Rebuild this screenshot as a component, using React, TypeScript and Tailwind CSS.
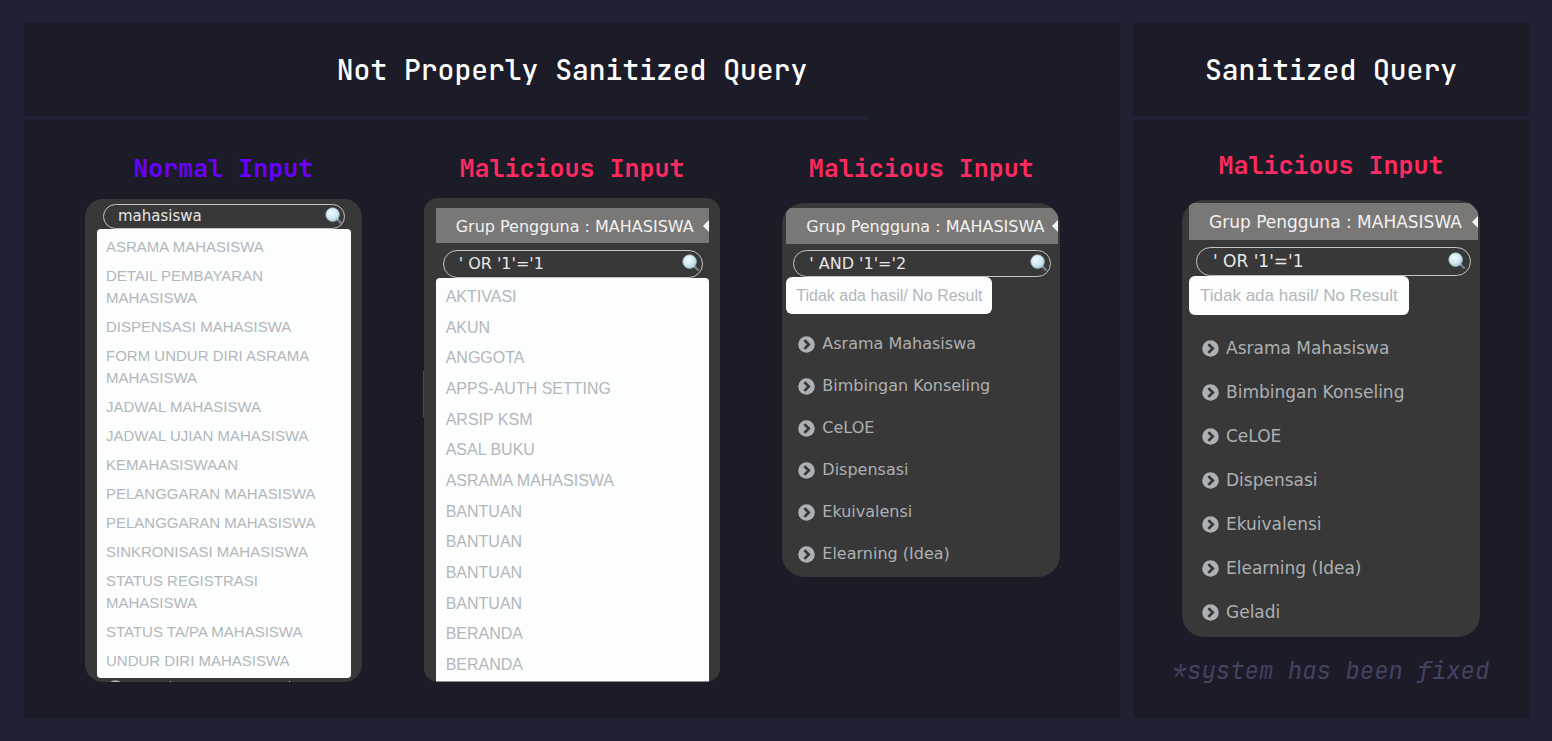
import { useId } from "react";
import type { ReactNode } from "react";

const mono = "font-['JetBrains_Mono','DejaVu_Sans_Mono',monospace]";

function Magnifier() {
  const id = useId();
  return (
    <svg viewBox="0 0 18 18" className="mb-[2px] h-[18px] w-[18px] shrink-0" aria-hidden="true">
      <defs>
        <radialGradient id={id} cx="0.4" cy="0.35" r="0.7">
          <stop offset="0" stopColor="#f0fafd" />
          <stop offset="0.6" stopColor="#cfe9f3" />
          <stop offset="1" stopColor="#a5cbd9" />
        </radialGradient>
      </defs>
      <path d="M12 12 L16 15.8" stroke="#747b7e" strokeWidth="2.4" strokeLinecap="round" />
      <path d="M11.5 11.5 L13.2 13.2" stroke="#a9afb2" strokeWidth="1.6" />
      <circle cx="7.6" cy="7.6" r="6.8" fill={`url(#${id})`} stroke="#a3b4bb" strokeWidth="0.8" />
    </svg>
  );
}

function ChevronDisc() {
  return (
    <svg viewBox="0 0 16 16" className="h-[17px] w-[17px] shrink-0" aria-hidden="true">
      <circle cx="8" cy="8" r="7.8" fill="#adb0b5" />
      <path d="M6 3.9 L10.1 8 L6 12.1" fill="none" stroke="#383838" strokeWidth="2.6" />
    </svg>
  );
}

function Search({ value, className }: { value: string; className: string }) {
  return (
    <label className={`flex items-center rounded-full border border-[#c4c4c4] ${className}`}>
      <input
        type="text"
        aria-label="Cari menu"
        defaultValue={value}
        className="w-full min-w-0 flex-1 bg-transparent text-[#e6e6e6] outline-none"
      />
      <Magnifier />
    </label>
  );
}

function GroupBar({ className }: { className: string }) {
  return (
    <button
      type="button"
      className={`flex items-center justify-between overflow-hidden bg-[#7a7876] pt-[2px] pl-5 whitespace-nowrap text-[#f2f2f2] ${className}`}
    >
      Grup Pengguna : MAHASISWA
      <svg viewBox="0 0 6 12" className="mb-[2px] h-3 w-[6px] shrink-0" aria-hidden="true">
        <path d="M0 6 L6 0 V12 Z" fill="#f2f2f2" />
      </svg>
    </button>
  );
}

function Results({ items, className }: { items: string[]; className: string }) {
  return (
    <ul
      className={`flex flex-col bg-[#fcfefe] font-['Liberation_Sans',Arial,sans-serif] ${className}`}
    >
      {items.map((item, i) => (
        <li key={i}>
          <a href="#" className="block text-[#b3b6bb]">
            {item}
          </a>
        </li>
      ))}
    </ul>
  );
}

function Menu({ items, className }: { items: string[]; className: string }) {
  return (
    <ul className={`flex flex-col leading-6 text-[#adb0b3] ${className}`}>
      {items.map((item) => (
        <li key={item}>
          <a href="#" className="flex items-center gap-[7px]">
            <ChevronDisc />
            {item}
          </a>
        </li>
      ))}
    </ul>
  );
}

function Card({ className, children }: { className: string; children: ReactNode }) {
  return (
    <div
      className={`flex flex-col overflow-hidden bg-[#383838] font-['DejaVu_Sans',sans-serif] ${className}`}
    >
      {children}
    </div>
  );
}

function Panel({ title, rule, children }: { title: string; rule: string; children: ReactNode }) {
  return (
    <section className="flex min-w-0 flex-col bg-[#1c1b28]">
      <h2 className="py-[26px] text-center text-[28px] leading-[41px] font-medium text-white">{title}</h2>
      <div className={`h-1 bg-[#202132] ${rule}`} />
      {children}
    </section>
  );
}

const heading = "text-center text-[25px] leading-8 font-semibold whitespace-nowrap";

const normalResults = [
  "ASRAMA MAHASISWA",
  "DETAIL PEMBAYARAN MAHASISWA",
  "DISPENSASI MAHASISWA",
  "FORM UNDUR DIRI ASRAMA MAHASISWA",
  "JADWAL MAHASISWA",
  "JADWAL UJIAN MAHASISWA",
  "KEMAHASISWAAN",
  "PELANGGARAN MAHASISWA",
  "PELANGGARAN MAHASISWA",
  "SINKRONISASI MAHASISWA",
  "STATUS REGISTRASI MAHASISWA",
  "STATUS TA/PA MAHASISWA",
  "UNDUR DIRI MAHASISWA",
];

const leakedResults = [
  "AKTIVASI",
  "AKUN",
  "ANGGOTA",
  "APPS-AUTH SETTING",
  "ARSIP KSM",
  "ASAL BUKU",
  "ASRAMA MAHASISWA",
  "BANTUAN",
  "BANTUAN",
  "BANTUAN",
  "BANTUAN",
  "BERANDA",
  "BERANDA",
];

const menu = [
  "Asrama Mahasiswa",
  "Bimbingan Konseling",
  "CeLOE",
  "Dispensasi",
  "Ekuivalensi",
  "Elearning (Idea)",
];

export default function App() {
  return (
    <main
      className={`grid min-h-screen grid-cols-[1096fr_396fr] gap-[13px] bg-[#202132] py-[23px] pr-[23px] pl-6 ${mono}`}
    >
      <Panel title="Not Properly Sanitized Query" rule="w-10/13">
        <div className="grid grid-cols-[277fr_297fr_278fr] items-start gap-x-[62px] pt-8 pr-[60px] pl-[61px]">
          <div className="min-w-0">
            <h3 className={`${heading} text-[#6a00ff]`}>Normal Input</h3>
            <Card className="mt-[15px] rounded-[18px] pt-[5px] text-[15px]">
              <Search value="mahasiswa" className="mr-[17px] ml-[18px] h-[25px] pr-px pl-[14px]" />
              <Results
                items={normalResults}
                className="mr-[11px] ml-3 gap-[7px] rounded-[4px] pt-[7px] pr-6 pb-[6px] pl-[9px] leading-[22px]"
              />
              <div className="flex h-1 items-start overflow-hidden pt-[2px] pl-[22px]">
                <ChevronDisc />
                <span className="mt-px ml-[46px] h-px w-px bg-[#adb0b5]" />
                <span className="mt-px ml-[118px] h-px w-px bg-[#adb0b5]" />
              </div>
            </Card>
          </div>

          <div className="min-w-0">
            <h3 className={`${heading} text-[#ff2a5f]`}>Malicious Input</h3>
            <div className="relative mt-[14px]">
              <Card className="rounded-[14px] pt-[10px] text-[16px]">
                <GroupBar className="mr-[11px] ml-3 h-[35px]" />
                <Search value="' OR '1'='1" className="mr-[17px] ml-[19px] mt-[7px] h-7 pr-[2px] pl-[15px]" />
                <Results
                  items={leakedResults}
                  className="mr-[11px] ml-3 h-[404px] justify-between rounded-t-[4px] border-b border-[#8c8e90] px-[10px] pt-[7px] pb-1 leading-6"
                />
              </Card>
              <span className="absolute top-[173px] -left-px h-[46px] w-px bg-[#4b4b50]" />
            </div>
          </div>

          <div className="min-w-0">
            <h3 className={`${heading} text-[#ff2a5f]`}>Malicious Input</h3>
            <Card className="mt-[19px] rounded-[22px] pt-[5px] pb-[11px] text-[16px]">
              <GroupBar className="mr-[2px] ml-1 h-9" />
              <Search value="' AND '1'='2" className="mr-[9px] ml-[11px] mt-[6px] h-[27px] pr-[2px] pl-[15px]" />
              <p className="ml-1 self-start rounded-[6px] bg-[#fcfefe] px-[10px] font-['Liberation_Sans',Arial,sans-serif] leading-[37px] whitespace-nowrap text-[#b3b6bb]">
                Tidak ada hasil/ No Result
              </p>
              <Menu items={menu} className="mt-[18px] gap-[18px] pl-4" />
            </Card>
          </div>
        </div>
      </Panel>

      <Panel title="Sanitized Query" rule="w-full">
        <div className="flex flex-col pt-[29px]">
          <h3 className={`${heading} text-[#ff2a5f]`}>Malicious Input</h3>
          <Card className="mx-[49px] mt-[19px] rounded-[22px] pt-[3px] pb-[13px] text-[17px]">
            <GroupBar className="mr-[2px] ml-[7px] h-[37px]" />
            <Search value="' OR '1'='1" className="mr-[9px] ml-[14px] mt-[7px] h-[29px] pr-1 pl-4" />
            <p className="ml-[7px] self-start rounded-[6px] bg-[#fcfefe] px-[11px] font-['Liberation_Sans',Arial,sans-serif] leading-[39px] whitespace-nowrap text-[#b3b6bb]">
              Tidak ada hasil/ No Result
            </p>
            <Menu items={[...menu, "Geladi"]} className="mt-[21px] gap-5 pl-5" />
          </Card>
          <p className="mt-[18px] self-center text-[24px] leading-8 whitespace-nowrap text-[#44425f] italic">
            *system has been fixed
          </p>
        </div>
      </Panel>
    </main>
  );
}
